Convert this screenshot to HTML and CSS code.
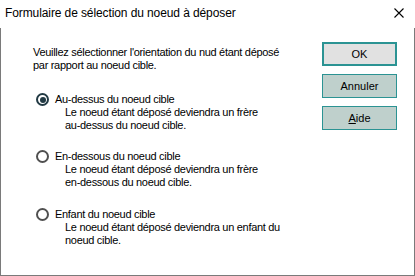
FILE: index.html
```html
<!DOCTYPE html>
<html lang="fr">
<head>
    <meta charset="UTF-8">
    <title>Formulaire de sélection du noeud à déposer</title>
    <link rel="stylesheet" href="styles.css">
</head>
<body>
    <div class="window">
        <div class="titlebar">
            <span class="title">Formulaire de sélection du noeud à déposer</span>
            <svg class="close" width="10" height="10" viewBox="0 0 10 10">
                <path d="M0.5 0.5 L9.5 9.5 M9.5 0.5 L0.5 9.5" stroke="#000" stroke-width="1.1" fill="none"/>
            </svg>
        </div>

        <div class="client">
            <!-- Choix de l'orientation -->
            <div class="content">
                <p class="intro">Veuillez sélectionner l'orientation du nud étant déposé<br>par rapport au noeud cible.</p>

                <div class="option">
                    <div class="option-head">
                        <span class="radio checked"></span>
                        <span>Au-dessus du noeud cible</span>
                    </div>
                    <p class="desc">Le noeud étant déposé deviendra un frère<br>au-dessus du noeud cible.</p>
                </div>

                <div class="option">
                    <div class="option-head">
                        <span class="radio"></span>
                        <span>En-dessous du noeud cible</span>
                    </div>
                    <p class="desc">Le noeud étant déposé deviendra un frère<br>en-dessous du noeud cible.</p>
                </div>

                <div class="option">
                    <div class="option-head">
                        <span class="radio"></span>
                        <span>Enfant du noeud cible</span>
                    </div>
                    <p class="desc">Le noeud étant déposé deviendra un enfant du<br>noeud cible.</p>
                </div>
            </div>

            <!-- Boutons -->
            <div class="buttons">
                <button class="btn default">OK</button>
                <button class="btn">Annuler</button>
                <button class="btn"><u>A</u>ide</button>
            </div>
        </div>
    </div>
</body>
</html>
```

FILE: styles.css
```css
body { margin: 0; background: #fff; }
.window { width: 415px; height: 276px; display: flex; flex-direction: column; background: #fff; font-family: "Liberation Sans", Arial, sans-serif; color: #000; }
.titlebar { height: 28px; display: flex; align-items: center; justify-content: space-between; padding: 0 11px 0 5px; font-size: 12px; letter-spacing: -0.1px; }
.title { padding-bottom: 2px; }
.close { margin-top: -2px; }
.client { flex: 1; display: flex; justify-content: space-between; border: 1px solid #7a7a7a; border-top: none; padding: 14px 17px 0 32px; font-size: 11px; line-height: 13px; letter-spacing: -0.3px; }
.content { display: flex; flex-direction: column; gap: 18px; padding-top: 4px; }
.content .option:last-child { margin-top: 1px; }
.intro { margin: 0 0 3px 0; }
.option-head { display: flex; align-items: center; gap: 6px; margin-left: 3px; }
.radio { flex-shrink: 0; width: 13px; height: 13px; box-sizing: border-box; border: 2px solid #505050; border-radius: 50%; display: flex; align-items: center; justify-content: center; }
.radio.checked { border-color: #223a44; }
.radio.checked::after { content: ""; width: 6px; height: 6px; border-radius: 50%; background: #223a44; }
.desc { margin: 0 0 0 32px; }
.buttons { display: flex; flex-direction: column; gap: 8px; }
.btn { width: 75px; height: 24px; padding: 0; font-family: inherit; font-size: 11px; color: #000; background: #bfd0cc; border: 1px solid #2b9393; }
.btn.default { background: #e1e1e1; border-width: 2px; }
```
